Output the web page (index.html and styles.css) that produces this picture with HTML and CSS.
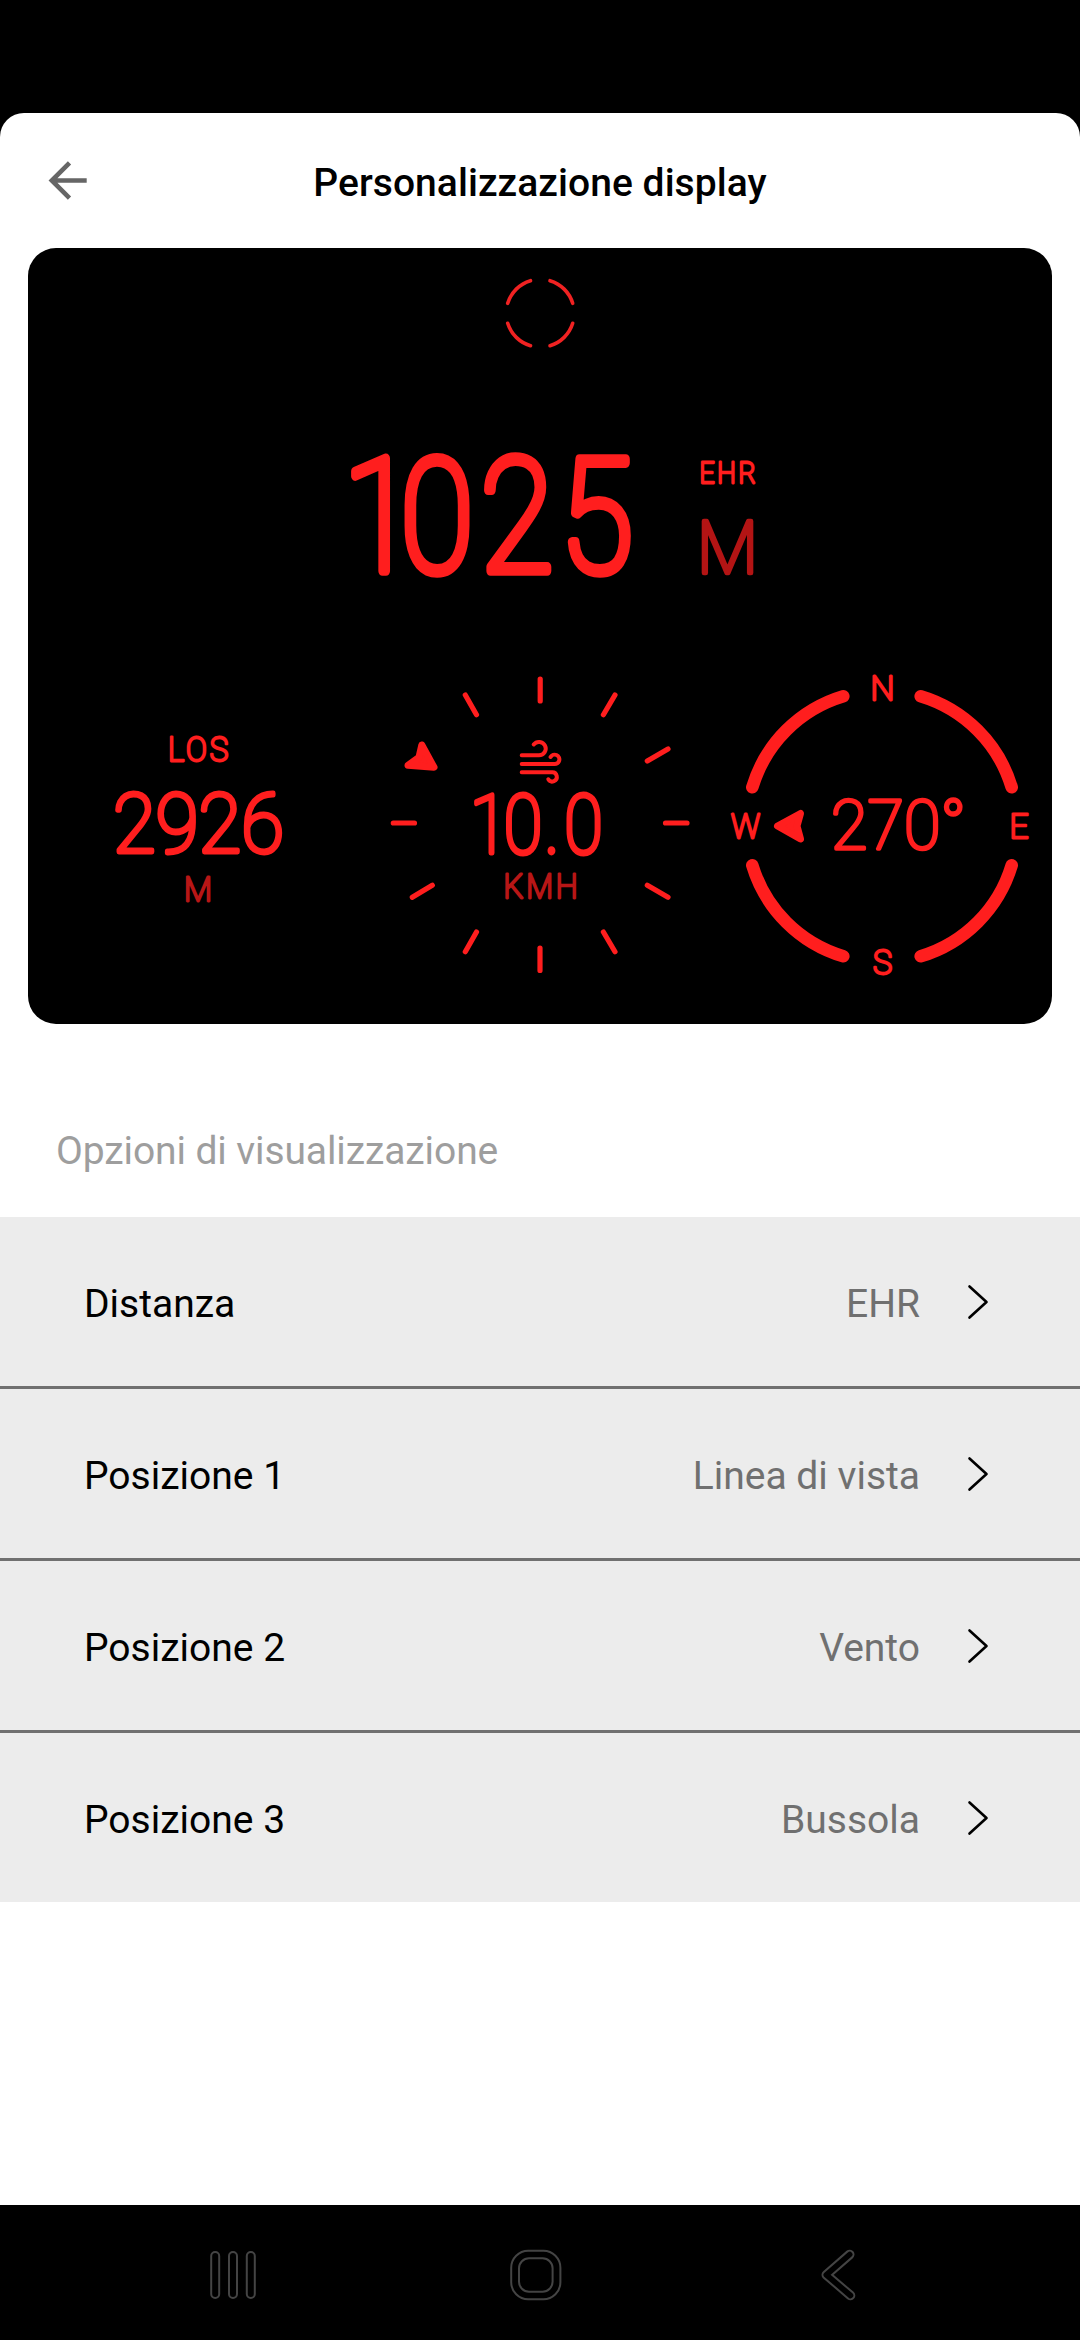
FILE: index.html
```html
<!DOCTYPE html>
<html lang="it">

<head>
	<meta charset="utf-8">
	<title>Personalizzazione display</title>
	<link rel="stylesheet" href="styles.css">
</head>

<body>
	<div class="sheet">
		<div class="header">
			<svg class="back" width="44" height="44" viewBox="46 159 44 44">
				<path d="M86.7 180.5H52M69.5 162.8L51.8 180.5L69.5 198.2" />
			</svg>
			<h1>Personalizzazione display</h1>
		</div>

		<svg class="preview" viewBox="28 248 1024 776">
			<!-- reticle -->
			<g class="reticle">
				<path d="M507.7 303.3A33.8 33.8 0 0 1 530.5 280.7" />
				<path d="M550 280.7A33.8 33.8 0 0 1 572.7 303.3" />
				<path d="M572.7 323.3A33.8 33.8 0 0 1 550 345.7" />
				<path d="M530.5 345.7A33.8 33.8 0 0 1 507.7 323.3" />
			</g>

			<!-- distance -->
			<text class="big" transform="translate(347 570.5) scale(.85 1)" x="-4.7 63 157 250.6">1025</text>
			<text class="label" x="699.5" y="482.5" textLength="59" lengthAdjust="spacingAndGlyphs">EHR</text>
			<text class="unit" x="697" y="573" textLength="61" lengthAdjust="spacingAndGlyphs">M</text>

			<!-- position 1 -->
			<text class="label los" x="168" y="761" textLength="63" lengthAdjust="spacingAndGlyphs">LOS</text>
			<text class="value" x="113" y="851.5" textLength="171" lengthAdjust="spacingAndGlyphs">2926</text>
			<text class="label los dim" x="184" y="900.5" textLength="31" lengthAdjust="spacingAndGlyphs">M</text>

			<!-- position 2 -->
			<g class="ticks">
				<path d="M540.2 679V701M615 695L603.4 714.7M668 749L647.3 761M665.5 823H687" />
				<path d="M647.3 885.3L668 897.3M603.4 932L615 951.7M540 948V970.5M476.5 932L465.3 951.7" />
				<path d="M432.3 885.3L412.3 897.3M393.3 823H414.5M465.3 695L476.5 714.7" />
			</g>
			<path class="pointer" d="M421.8 745L434 767.3L408 765.3L419 757.3Z" />
			<g class="wind">
				<path d="M521.7 755.3H539A6.7 6.7 0 1 0 533.7 744.5" />
				<path d="M521.7 764H554A4.7 4.7 0 1 0 550.6 757" />
				<path d="M521.7 772.3H552A4.6 4.6 0 1 1 548.3 779.3" />
			</g>
			<text class="value" transform="translate(474 852.5) scale(.86 1)" x="-5 34.6 82 105">10.0</text>
			<text class="label los dim" x="503.5" y="897.5" textLength="77" lengthAdjust="spacingAndGlyphs">KMH</text>

			<!-- position 3 -->
			<g class="ring">
				<path d="M752.3 787.3A135.7 135.7 0 0 1 843.3 696.3" />
				<path d="M920.7 696.3A135.7 135.7 0 0 1 1011.7 787.3" />
				<path d="M1011.7 865.3A135.7 135.7 0 0 1 920.7 956.3" />
				<path d="M843.3 956.3A135.7 135.7 0 0 1 752.3 865.3" />
			</g>
			<path class="pointer" d="M777.5 826L800.5 813.5L797 826L800.5 839Z" />
			<text class="label los" x="870.5" y="700" textLength="27" lengthAdjust="spacingAndGlyphs">N</text>
			<text class="label los" x="1009.5" y="837.5" textLength="22" lengthAdjust="spacingAndGlyphs">E</text>
			<text class="label los" x="873" y="974" textLength="22" lengthAdjust="spacingAndGlyphs">S</text>
			<text class="label los" x="731" y="837.5" textLength="32" lengthAdjust="spacingAndGlyphs">W</text>
			<text class="value bearing" x="831" y="848.5" textLength="135" lengthAdjust="spacingAndGlyphs">270°</text>
		</svg>

		<h2>Opzioni di visualizzazione</h2>

		<div class="options">
			<div class="row">
				<span class="name">Distanza</span>
				<span class="choice">EHR</span>
				<svg class="chevron" width="24" height="36" viewBox="0 0 24 36"><path d="M3.5 2.5L20.5 18L3.5 33.5" /></svg>
			</div>
			<div class="row">
				<span class="name">Posizione 1</span>
				<span class="choice">Linea di vista</span>
				<svg class="chevron" width="24" height="36" viewBox="0 0 24 36"><path d="M3.5 2.5L20.5 18L3.5 33.5" /></svg>
			</div>
			<div class="row">
				<span class="name">Posizione 2</span>
				<span class="choice">Vento</span>
				<svg class="chevron" width="24" height="36" viewBox="0 0 24 36"><path d="M3.5 2.5L20.5 18L3.5 33.5" /></svg>
			</div>
			<div class="row">
				<span class="name">Posizione 3</span>
				<span class="choice">Bussola</span>
				<svg class="chevron" width="24" height="36" viewBox="0 0 24 36"><path d="M3.5 2.5L20.5 18L3.5 33.5" /></svg>
			</div>
		</div>
	</div>

	<div class="navbar">
		<svg width="60" height="60" viewBox="203 2245 60 60">
			<rect x="211.2" y="2252" width="8" height="46" rx="4" />
			<rect x="229" y="2252" width="8" height="46" rx="4" />
			<rect x="246.8" y="2252" width="8" height="46" rx="4" />
		</svg>
		<svg width="60" height="60" viewBox="505 2245 60 60">
			<rect x="510.2" y="2250.7" width="49.2" height="48.6" rx="17" />
			<rect x="518" y="2258.3" width="33.6" height="33.4" rx="10" />
		</svg>
		<svg width="60" height="60" viewBox="808 2245 60 60">
			<path class="outer" d="M849.7 2254.5L826.3 2274.8L850.5 2295.5" />
			<path class="inner" d="M849.7 2254.5L826.3 2274.8L850.5 2295.5" />
		</svg>
	</div>
</body>

</html>
```
FILE: styles.css
```css
body {
	margin: 0;
	height: 2340px;
	box-sizing: border-box;
	padding-top: 113px;
	display: flex;
	flex-direction: column;
	background-color: #000000;
	font: 39px Roboto, sans-serif;
	color: #000000;
}

svg {
	display: block;
	fill: none;
	stroke-linecap: round;
	stroke-linejoin: round;
}

.sheet {
	flex: 1;
	background-color: #ffffff;
	border-radius: 24px 24px 0 0;
}

.header {
	display: grid;
	grid-template-columns: 44px 1fr 44px;
	align-items: center;
	height: 135px;
	padding: 0 46px;
}

.back {
	stroke: #666666;
	stroke-width: 4.6;
	stroke-linecap: butt;
	stroke-linejoin: miter;
}

h1 {
	margin: 4px 0 0;
	font-size: 39px;
	font-weight: 500;
	letter-spacing: 0.05px;
	text-align: center;
}

.preview {
	width: 1024px;
	height: 776px;
	margin: 0 28px;
	border-radius: 28px;
	background-color: #000000;
}

/* thin glyphs with a round stroke on top */
.preview text {
	font-family: Roboto, sans-serif;
	font-weight: 100;
	fill: #ff1e1e;
	stroke: #ff1e1e;
}

.preview .big {
	font-size: 157px;
	stroke-width: 9.6;
}

.preview .value {
	font-size: 82px;
	stroke-width: 4.8;
}

.preview .bearing {
	font-size: 68px;
	stroke-width: 3.6;
}

.preview .label {
	font-size: 29px;
	letter-spacing: 3px;
	stroke-width: 2.8;
}

.preview .los {
	font-size: 33px;
}

.preview .unit {
	font-size: 73px;
	stroke-width: 4.6;
	fill: #b31414;
	stroke: #b31414;
}

.preview .dim {
	fill: #b81616;
	stroke: #b81616;
}

.reticle {
	stroke: #f02222;
	stroke-width: 3.6;
}

.ticks {
	stroke: #ff1e1e;
	stroke-width: 5.2;
}

.wind {
	stroke: #ff1e1e;
	stroke-width: 4;
}

.ring {
	stroke: #ff1e1e;
	stroke-width: 12.6;
}

.pointer {
	fill: #ff1e1e;
	stroke: #ff1e1e;
	stroke-width: 7;
}

h2 {
	margin: 0;
	height: 193px;
	padding: 61px 56px 0;
	box-sizing: border-box;
	font-size: 39px;
	font-weight: 400;
	letter-spacing: -0.1px;
	line-height: 132px;
	color: #9e9e9e;
}

.row {
	display: flex;
	align-items: center;
	height: 169px;
	padding: 0 90px 0 84px;
	background-color: #ececec;
}

.row + .row {
	border-top: 3px solid #707070;
}

.row span {
	padding-top: 4px;
}

.choice {
	margin-left: auto;
	color: #707070;
}

.chevron {
	margin-left: 46px;
	stroke: #000000;
	stroke-width: 2.6;
}

.navbar {
	display: flex;
	justify-content: space-between;
	height: 135px;
	padding: 40px 212px 0 203px;
	box-sizing: border-box;
	stroke: #444444;
	stroke-width: 2;
}

.navbar .outer {
	stroke-width: 9.6;
}

.navbar .inner {
	stroke: #000000;
	stroke-width: 5.6;
}
```
